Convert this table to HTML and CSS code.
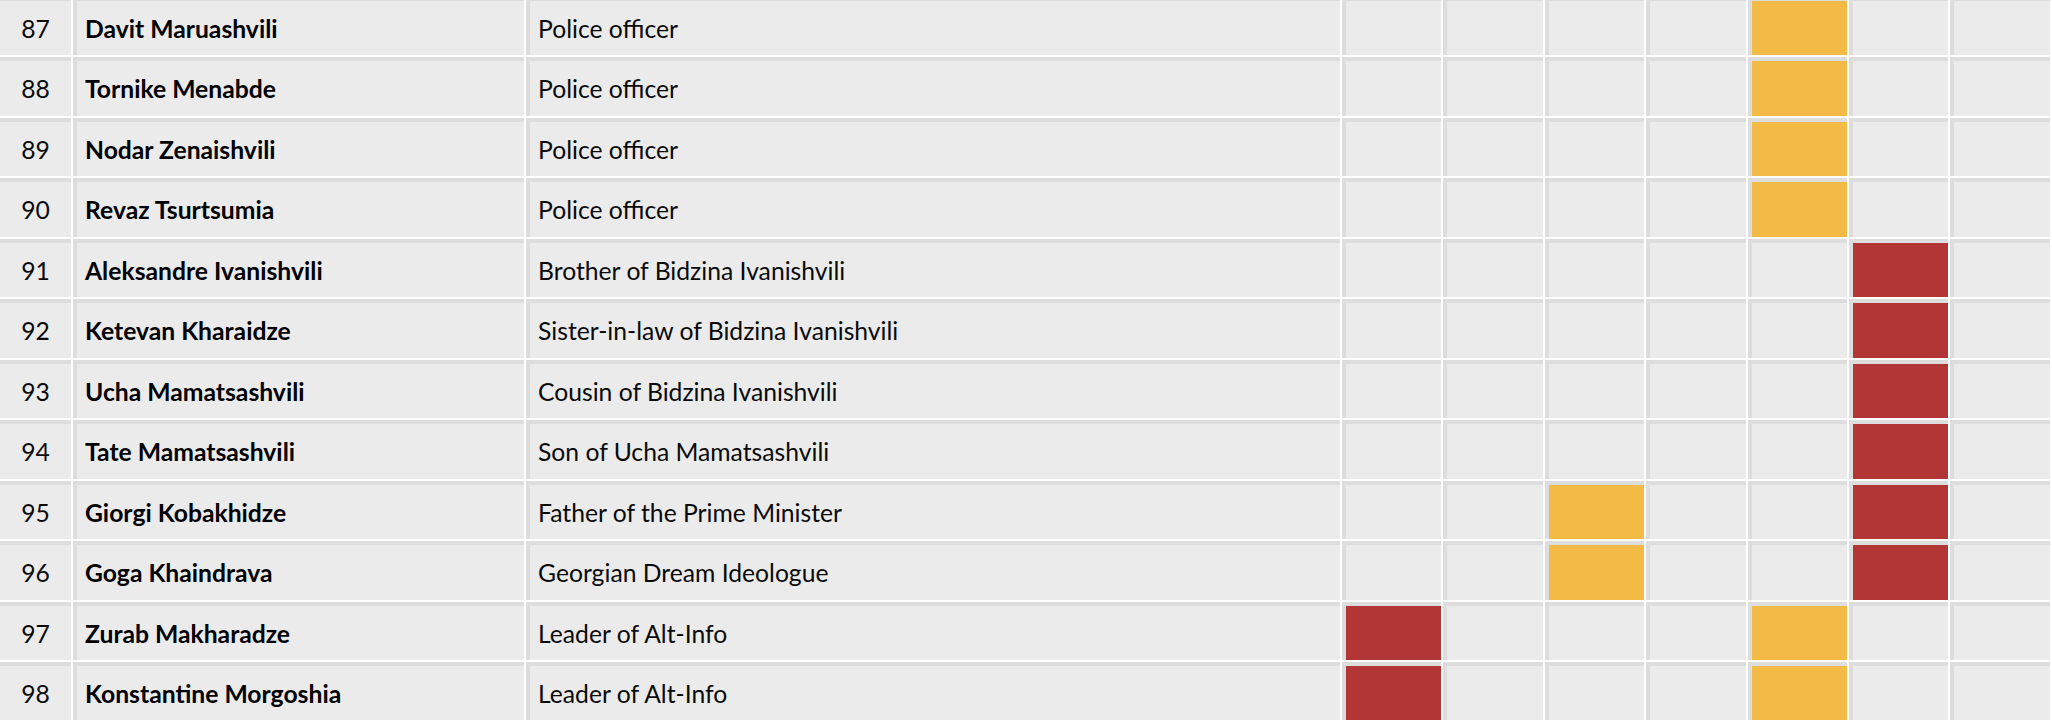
FILE: index.html
```html
<!DOCTYPE html>
<html lang="en">
<head>
<meta charset="utf-8">
<title>Sanctions table</title>
<link rel="stylesheet" href="styles.css">
</head>
<body>
<table class="grid">
<tbody>
<tr><td class="num">87</td><td class="name">Davit Maruashvili</td><td class="role">Police officer</td><td class="m"></td><td class="m"></td><td class="m"></td><td class="m"></td><td class="m y"></td><td class="m"></td><td class="m"></td><td class="m"></td></tr>
<tr><td class="num">88</td><td class="name">Tornike Menabde</td><td class="role">Police officer</td><td class="m"></td><td class="m"></td><td class="m"></td><td class="m"></td><td class="m y"></td><td class="m"></td><td class="m"></td><td class="m"></td></tr>
<tr><td class="num">89</td><td class="name">Nodar Zenaishvili</td><td class="role">Police officer</td><td class="m"></td><td class="m"></td><td class="m"></td><td class="m"></td><td class="m y"></td><td class="m"></td><td class="m"></td><td class="m"></td></tr>
<tr><td class="num">90</td><td class="name">Revaz Tsurtsumia</td><td class="role">Police officer</td><td class="m"></td><td class="m"></td><td class="m"></td><td class="m"></td><td class="m y"></td><td class="m"></td><td class="m"></td><td class="m"></td></tr>
<tr><td class="num">91</td><td class="name">Aleksandre Ivanishvili</td><td class="role">Brother of Bidzina Ivanishvili</td><td class="m"></td><td class="m"></td><td class="m"></td><td class="m"></td><td class="m"></td><td class="m r"></td><td class="m"></td><td class="m"></td></tr>
<tr><td class="num">92</td><td class="name">Ketevan Kharaidze</td><td class="role">Sister-in-law of Bidzina Ivanishvili</td><td class="m"></td><td class="m"></td><td class="m"></td><td class="m"></td><td class="m"></td><td class="m r"></td><td class="m"></td><td class="m"></td></tr>
<tr><td class="num">93</td><td class="name">Ucha Mamatsashvili</td><td class="role">Cousin of Bidzina Ivanishvili</td><td class="m"></td><td class="m"></td><td class="m"></td><td class="m"></td><td class="m"></td><td class="m r"></td><td class="m"></td><td class="m"></td></tr>
<tr><td class="num">94</td><td class="name">Tate Mamatsashvili</td><td class="role">Son of Ucha Mamatsashvili</td><td class="m"></td><td class="m"></td><td class="m"></td><td class="m"></td><td class="m"></td><td class="m r"></td><td class="m"></td><td class="m"></td></tr>
<tr><td class="num">95</td><td class="name">Giorgi Kobakhidze</td><td class="role">Father of the Prime Minister</td><td class="m"></td><td class="m"></td><td class="m y"></td><td class="m"></td><td class="m"></td><td class="m r"></td><td class="m"></td><td class="m"></td></tr>
<tr><td class="num">96</td><td class="name">Goga Khaindrava</td><td class="role">Georgian Dream Ideologue</td><td class="m"></td><td class="m"></td><td class="m y"></td><td class="m"></td><td class="m"></td><td class="m r"></td><td class="m"></td><td class="m"></td></tr>
<tr><td class="num">97</td><td class="name">Zurab Makharadze</td><td class="role">Leader of Alt-Info</td><td class="m r"></td><td class="m"></td><td class="m"></td><td class="m"></td><td class="m y"></td><td class="m"></td><td class="m"></td><td class="m"></td></tr>
<tr><td class="num">98</td><td class="name">Konstantine Morgoshia</td><td class="role">Leader of Alt-Info</td><td class="m r"></td><td class="m"></td><td class="m"></td><td class="m"></td><td class="m y"></td><td class="m"></td><td class="m"></td><td class="m"></td></tr>
</tbody>
</table>
</body>
</html>
```

FILE: styles.css
```css
html, body {
  margin: 0;
  padding: 0;
  overflow: hidden;
  background: #ffffff;
}

html {
  width: 2052px;
  height: 720px;
}

body {
  width: 2400px;
  height: 720px;
  font-family: Lato, "Liberation Sans", sans-serif;
  color: #0a0a0a;
}

.grid {
  border-collapse: separate;
  border-spacing: 2px;
  table-layout: fixed;
  margin: -5.5px 0 0 -6px;
  background: #ffffff;
}

.grid td {
  box-sizing: border-box;
  height: 58.5px;
  background: #ebebeb;
  border-top: 4px solid #dddddd;
  border-left: 4px solid #dddddd;
  padding: 3px 8px 0;
  font-size: 24.7px;
  line-height: 1;
  vertical-align: middle;
  white-space: nowrap;
}

.grid td.num {
  width: 75px;
  padding: 3px 0 0;
  text-align: center;
}

.grid td.name {
  width: 451px;
  font-weight: 700;
  color: #000000;
}

.grid td.role {
  width: 814px;
}

.grid td.m {
  width: 99.4px;
  padding: 0;
}

.grid td.y {
  background: #f3bb45;
}

.grid td.r {
  background: #b23635;
}
```
